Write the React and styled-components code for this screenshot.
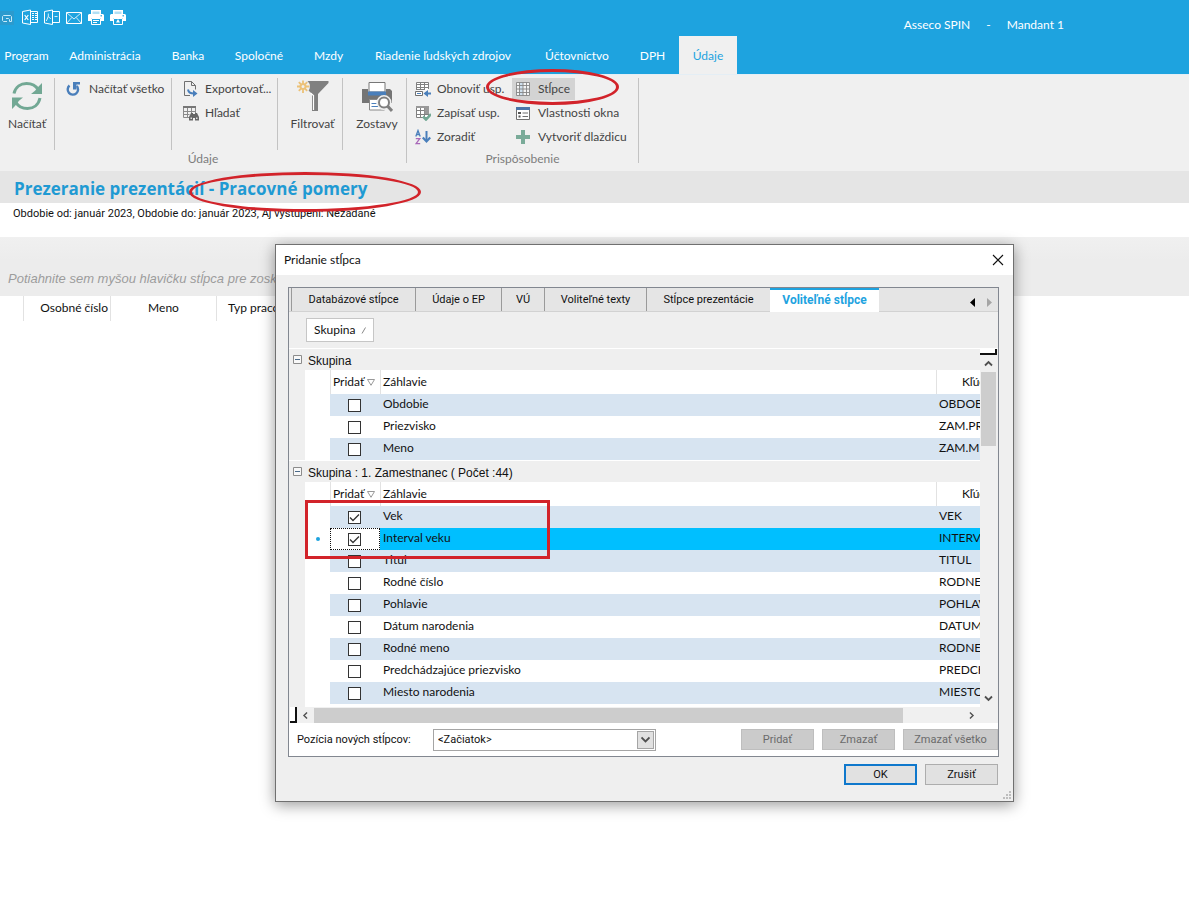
import React, { useState } from 'react';
import styled, { createGlobalStyle, css } from 'styled-components';

const ui = 'Lato, "Open Sans", sans-serif';
const narrow = 'Roboto, "Liberation Sans", sans-serif';
const blue = '#1ea3df';
const red = '#d2232a';

const GlobalStyle = createGlobalStyle`
  * { box-sizing: border-box; }
  body { margin: 0; background: #fff; color: #111; font: 12px/16px ${ui}; }
  button, select { font: inherit; color: inherit; margin: 0; padding: 0; border: 0; background: none; }
  table { border-collapse: separate; border-spacing: 0; table-layout: fixed; }
  th, td { padding: 0; font-weight: 400; text-align: left; white-space: nowrap; overflow: hidden; }
`;

const Page = styled.div`
  position: relative;
  min-height: 100vh;
  overflow: hidden;
`;

/* ---------- top bar ---------- */
const TopBar = styled.header`
  display: flex;
  justify-content: space-between;
  height: 36px;
  padding-right: 125px;
  background: ${blue};
  color: #fff;
`;
const QuickBar = styled.div`
  display: flex;
  gap: 6px;
  padding-top: 9px;
`;
const QuickButton = styled.button`
  width: 16px;
  height: 17px;
  svg { display: block; }
`;
const AppTitle = styled.div`
  display: flex;
  gap: 16px;
  padding-top: 17px;
`;

const MenuBar = styled.nav`
  display: flex;
  height: 38px;
  background: ${blue};
  color: #fff;
`;
const MenuTab = styled.button`
  flex: none;
  width: ${p => p.$w}px;
  padding-top: 2px;
  white-space: nowrap;
  ${p => p.$active && css`
    background: #f0f0f0;
    color: ${blue};
  `}
`;

/* ---------- ribbon ---------- */
const Ribbon = styled.div`
  display: flex;
  height: 97px;
  background: #f0f0f0;
  border-top: 1px solid #e4eef5;
  color: #444;
`;
const RibbonGroup = styled.section`
  display: flex;
  flex-direction: column;
  width: ${p => p.$w}px;
  border-right: 1px solid #c3c3c3;
  margin: 3px 0 8px;
`;
const RibbonBody = styled.div`
  display: flex;
  flex: none;
  height: 72px;
`;
const RibbonCaption = styled.div`
  padding-top: 2px;
  line-height: 14px;
  text-align: center;
  color: #7d7d7d;
`;
const BigButton = styled.button`
  width: ${p => p.$w}px;
  height: 72px;
  padding: 2px 0 0 ${p => p.$pad || 0}px;
  display: flex;
  flex-direction: column;
  align-items: center;
  gap: 4px;
  border-right: ${p => (p.$last ? '0' : '1px solid #c3c3c3')};
  svg { display: block; flex: none; }
`;
const CommandColumn = styled.div`
  width: ${p => p.$w}px;
  padding-left: ${p => p.$pad}px;
  border-right: ${p => (p.$line ? '1px solid #c3c3c3' : '0')};
  display: flex;
  flex-direction: column;
  gap: 2px;
  align-items: flex-start;
`;
const Command = styled.button`
  display: flex;
  align-items: center;
  gap: ${p => p.$gap || 6}px;
  height: 22px;
  padding: 0 5px 0 4px;
  white-space: nowrap;
  background: ${p => (p.$pressed ? '#d3d3d3' : 'none')};
  svg { display: block; flex: none; }
`;

/* ---------- work area ---------- */
const HeadingBand = styled.div`
  height: 32px;
  padding-left: 14px;
  background: #e5e5e5;
`;
const Heading = styled.h1`
  margin: 0;
  font: 700 17px/35px "Open Sans", sans-serif;
  color: #1f9ad3;
`;
const Filter = styled.p`
  margin: 0;
  height: 34px;
  padding: 2px 0 0 13px;
  font: 11px/18px ${narrow};
`;
const DropHint = styled.div`
  height: 59px;
  padding: 33px 0 0 8px;
  background: linear-gradient(#f0f0f0, #ececec 24px);
  font: italic 13px/17px "Liberation Sans", sans-serif;
  color: #9c9c9c;
`;
const DataTable = styled.table`
  width: 100%;
  th {
    height: 25px;
    padding-bottom: 2px;
    border-right: 1px solid #e2e2e2;
    text-align: center;
  }
  th:last-child { border: 0; text-align: left; padding-left: 11px; }
  th:nth-child(2) { text-align: right; padding-right: 2px; }
`;
const Col = styled.col`
  width: ${p => (p.$w ? p.$w + 'px' : 'auto')};
`;

/* ---------- dialog ---------- */
const Dialog = styled.section`
  position: absolute;
  left: 275px;
  top: 244px;
  width: 739px;
  display: flex;
  flex-direction: column;
  background: #efefef;
  border: 1px solid #707070;
  box-shadow: 0 3px 14px rgba(0, 0, 0, 0.4);
`;
const DialogBar = styled.header`
  display: flex;
  justify-content: space-between;
  align-items: center;
  height: 30px;
  padding: 0 9px 0 8px;
  background: #fff;
`;
const DialogTitle = styled.h2`
  margin: 0;
  font: 12px/16px ${ui};
`;
const CloseButton = styled.button`
  width: 12px;
  height: 12px;
  svg { display: block; }
`;
const Panel = styled.div`
  margin: 12px 14px 0 12px;
  border: 1px solid #828790;
`;
const TabStrip = styled.div`
  display: flex;
  height: 24px;
  background: #e5e5e5;
  border-bottom: 1px solid #d2d2d2;
  padding-left: 2px;
  font-family: ${narrow};
  font-size: 11px;
`;
const Tab = styled.button`
  flex: none;
  width: ${p => p.$w}px;
  height: 23px;
  border-left: 1px solid #9a9a9a;
  ${p => p.$active && css`
    height: 24px;
    border-left: 0;
    border-top: 2px solid ${blue};
    padding-bottom: 2px;
    background: #fff;
    color: ${blue};
    font-weight: 700;
    font-size: 12px;
  `}
`;
const TabArrows = styled.div`
  display: flex;
  gap: 12px;
  margin-left: auto;
  padding: 10px 6px 0 0;
`;
const Arrow = styled.button`
  width: 5px;
  height: 9px;
  svg { display: block; }
`;
const GroupBar = styled.div`
  height: 37px;
  padding: 6px 0 0 17px;
  border-bottom: 1px solid #fff;
`;
const GroupChip = styled.button`
  display: flex;
  align-items: center;
  gap: 6px;
  height: 24px;
  padding: 0 7px;
  border: 1px solid #c6c6c6;
  background: #fff;
`;
const GridArea = styled.div`
  display: flex;
  height: 358px;
`;
const GridView = styled.div`
  flex: 1;
  min-width: 0;
  overflow: hidden;
  background: linear-gradient(90deg, #efefef 16px, #fff 16px);
`;
const GroupRow = styled.button`
  display: flex;
  align-items: center;
  gap: 6px;
  width: 100%;
  height: ${p => (p.$first ? 21 : 22)}px;
  padding: 2px 0 0 4px;
  border-top: ${p => (p.$first ? '0' : '1px solid #fff')};
  background: #efefef;
  font: 12px/16px "Liberation Sans", sans-serif;
  svg { margin-bottom: 2px; }
`;
const ColumnTable = styled.table`
  width: calc(100% + 30px);
  thead th { height: 24px; }
  thead th:nth-child(n + 3) { border-left: 1px solid #e2e2e2; }
  thead th:nth-child(3), thead th:nth-child(4) { padding-left: 2px; }
  thead th:nth-child(5) { text-align: center; }
  td:nth-child(4), td:nth-child(5) { padding-left: 3px; }
  th:first-child, td:first-child { background: #efefef; }
`;
const Sortable = styled.div`
  display: flex;
  align-items: center;
  gap: 3px;
`;
const Row = styled.tr`
  td { height: 22px; }
  td:nth-child(n + 3) {
    padding-bottom: 2px;
    background: ${p => (p.$current ? '#00bfff' : p.$odd ? '#d7e4f1' : '#fff')};
  }
  td:nth-child(2) svg { display: block; margin: 0 auto; }
  td:nth-child(3) { padding: 0 2px 0 0; }
  ${p => p.$current && css`
    td:nth-child(3) {
      background: #fff;
      outline: 1px dotted #111;
      outline-offset: -1px;
    }
  `}
`;
const Check = styled.input`
  appearance: none;
  display: block;
  width: 13px;
  height: 13px;
  margin: 0 auto;
  border: 1px solid #333;
  background: #fff;
  &:checked {
    background: #fff url("data:image/svg+xml,%3Csvg xmlns='http://www.w3.org/2000/svg' viewBox='0 0 11 11'%3E%3Cpath d='M1 5.5l3 3 6-6' fill='none' stroke='%23333' stroke-width='1.3'/%3E%3C/svg%3E") center / 11px 11px no-repeat;
  }
`;
const VScroll = styled.div`
  display: flex;
  flex-direction: column;
  width: 17px;
  margin-right: 1px;
  padding-bottom: 3px;
  background: #f0f0f0;
  align-items: center;
`;
const TopNotch = styled.div`
  width: 17px;
  height: 6px;
  flex: none;
  margin-bottom: 4px;
  background: #fff;
  border-right: 2px solid #111;
  border-bottom: 2px solid #111;
`;
const VThumb = styled.div`
  width: 15px;
  height: 74px;
  margin: 4px 0 auto;
  background: #cdcdcd;
`;
const HScroll = styled.div`
  display: flex;
  align-items: center;
  height: 16px;
  padding-right: 23px;
  gap: 5px;
  background: #f0f0f0;
`;
const LeftNotch = styled.div`
  width: 7px;
  height: 16px;
  margin-left: 1px;
  background: #fff;
  border-right: 2px solid #111;
  border-bottom: 2px solid #111;
`;
const HTrack = styled.div`
  flex: 1;
  padding-right: 60px;
`;
const HThumb = styled.div`
  height: 15px;
  background: #cdcdcd;
`;
const ScrollButton = styled.button`
  flex: none;
  display: flex;
  align-items: center;
  justify-content: center;
  svg { display: block; }
`;
const PositionBar = styled.div`
  display: flex;
  align-items: center;
  height: 33px;
  padding-left: 8px;
  background: #fff;
  font: 11px/16px ${narrow};
`;
const PositionLabel = styled.label`
  width: 136px;
`;
const SelectBox = styled.div`
  position: relative;
  width: 223px;
  height: 22px;
  margin-right: auto;
`;
const Select = styled.select`
  appearance: none;
  width: 100%;
  height: 22px;
  padding: 0 24px 0 4px;
  border: 1px solid #a5a5a5;
  background: #fff;
`;
const SelectArrow = styled.span`
  position: absolute;
  right: 2px;
  top: 2px;
  width: 17px;
  height: 18px;
  display: grid;
  place-items: center;
  border: 1px solid #a5a5a5;
  background: #e1e1e1;
  pointer-events: none;
`;
const FlatButton = styled.button`
  width: ${p => p.$w || 73}px;
  height: 21px;
  margin-left: 8px;
  border: 1px solid #bebebe;
  background: #cbcbcb;
  color: #6a6a6a;
`;
const DialogFooter = styled.footer`
  display: flex;
  justify-content: flex-end;
  gap: 8px;
  height: 44px;
  padding: 7px 15px 0 0;
  font: 11px/16px ${narrow};
`;
const DialogButton = styled.button`
  width: 73px;
  height: 21px;
  border: ${p => (p.$primary ? '2px solid #0f78cc' : '1px solid #adadad')};
  background: #e1e1e1;
`;
const Grip = styled.svg`
  position: absolute;
  right: 2px;
  bottom: 2px;
`;

/* ---------- red pen marks ---------- */
const Mark = styled.div`
  position: absolute;
  left: ${p => p.$x}px;
  top: ${p => p.$y}px;
  width: ${p => p.$w}px;
  height: ${p => p.$h}px;
  border: 3px solid ${red};
  border-radius: ${p => (p.$round ? '50%' : '0')};
  pointer-events: none;
`;

/* ---------- icons ---------- */
const IconMenu = () => (
  <svg width="16" height="17" viewBox="0 0 16 17" fill="none">
    <rect x="0" y="2" width="14" height="14" fill="#2b9ace" />
    <path d="M7 12.500H3.500L2.500 11.500V7.500L3.500 6.500H10.500L11.500 7.500V12.500H9.500V10.500L8.500 9.500H6" stroke="#c9ebfa" />
  </svg>
);
const IconExcel = () => (
  <svg width="16" height="17" viewBox="0 0 16 17" fill="none" stroke="#fff">
    <path d="M.5 2.500L8.500 1V15.500L.5 14zM8.500 2.500H15.500V13.500H8.500" />
    <path d="M2.700 6l3.600 5M6.300 6l-3.600 5" strokeWidth="1.200" />
    <path d="M10 4.500h2M13 4.500h2M10 6.500h2M13 6.500h2M10 8.500h2M13 8.500h2M10 10.500h2M13 10.500h2" />
  </svg>
);
const IconPdf = () => (
  <svg width="16" height="17" viewBox="0 0 16 17" fill="none" stroke="#fff">
    <path d="M.5 2.500L8.500 1V15.500L.5 14zM8.500 2.500H15.500V13.500H8.500" />
    <path d="M4.300 4.500v3L2.300 12M4.300 7.500l2.500 2.500" opacity=".85" />
    <path d="M10.500 7.500h3" opacity=".8" />
  </svg>
);
const IconMail = () => (
  <svg width="16" height="17" viewBox="0 0 16 17" fill="none" stroke="#fff">
    <path d="M.5 3.500H15.500V14.500H.5z" />
    <path d="M.5 3.500L8 10 15.500 3.500M.5 14.500L5.800 8.500M15.500 14.500L10.200 8.500" strokeWidth=".8" />
  </svg>
);
const IconPrint = ({ star }) => (
  <svg width="16" height="17" viewBox="0 0 16 17">
    <path d="M3 1h10v4H3z" fill="#fff" />
    <path d="M4.500 2.500h7V5h-7z" fill={blue} opacity=".35" />
    <path d="M1 5h14l1 1v6h-3V9H3v3H0V6z" fill="#fff" />
    <rect x="12.500" y="6.200" width="1.500" height="1.200" fill={blue} />
    <path d="M3.500 9.500h9v6h-9z" fill={blue} stroke="#fff" />
    {star ? <path d="M8 10l2 3.500H6z" fill="#fff" /> : <path d="M5 11.500h6M5 13.500h4" stroke="#fff" />}
  </svg>
);
const IconRefresh = () => (
  <svg width="30" height="32" viewBox="0 -1 30 32" fill="none" stroke="#72a894" strokeWidth="3">
    <path d="M2 12.500C3.500 5.500 9 2.500 14.500 2.500 19.500 2.500 23.500 4 26 8.500" />
    <path d="M28 17c-1.500 7-6.500 10.500-12.500 10.500C10.500 27.500 6.500 26 4 21.500" />
    <path d="M30 2v11H19l4-3.200 4-4.800z M0 28V16.500h11l-4 3.200L3 25z" fill="#72a894" stroke="none" />
  </svg>
);
const IconReload = () => (
  <svg width="14" height="15" viewBox="0 0 14 15" fill="none" stroke="#4a7fbb" strokeWidth="2.400">
    <path d="M3.500 3.500A5.200 5.200 0 1 0 10.800 4" />
    <path d="M7 0H14V2.600H10.500V7.500H7z" fill="#4a7fbb" stroke="none" />
  </svg>
);
const IconExport = () => (
  <svg width="16" height="16" viewBox="0 0 16 16" fill="none">
    <path d="M7 14.500H1.500V.5H8.500L12.500 4.500V8.500M8.500 .5V4.500H12.500" stroke="#707070" />
    <path d="M5 8.500c.5 3 2.500 4 6 4" stroke="#4a7fbb" strokeWidth="2" />
    <path d="M10 9l4.500 3.500L10 16z" fill="#4a7fbb" />
  </svg>
);
const IconFind = () => (
  <svg width="16" height="16" viewBox="0 0 16 16">
    <path d="M.5 1.500h12V8M.5 1.500v11H6M4.500 3v9.500M8.500 3v5M.5 6.500h12M.5 9.500h6" fill="none" stroke="#8a8a8a" />
    <path d="M0 1h13v2H0z" fill="#777" />
    <path d="M8 8h2v1h2V8h2l2 4v3.500h-4V13h-2v2.500H6V12z" fill="#666" />
    <path d="M7.500 12.500h1.500v1.500H7.500zM13 12.500h1.500v1.500H13z" fill="#ddd" />
  </svg>
);
const IconFilter = () => (
  <svg width="32" height="32" viewBox="0 0 32 32">
    <path d="M8 1H31.500V3L21 14V31H15V14L11 10z" fill="#808080" />
    <path d="M13.500 13l3 2.500V30" fill="none" stroke="#fff" strokeWidth="1.200" />
    <circle cx="6" cy="6.500" r="7" fill="#f0f0f0" />
    <circle cx="6" cy="6.500" r="2.500" fill="none" stroke="#ecc177" strokeWidth="2" />
    <path d="M6 .5v3M6 9.500v3.500M0 6.500h3M9 6.500h3.500M1.800 2.200l2 2M8.200 8.800l2 2M10.200 2.200l-2 2M3.800 8.800l-2 2" stroke="#ecc177" strokeWidth="1.800" />
  </svg>
);
const IconReports = () => (
  <svg width="32" height="32" viewBox="0 0 32 32">
    <path d="M8.500 2.500h15v10h-15z" fill="#fff" stroke="#777" />
    <path d="M1 9h6v3h18V9h4l2 2v12H1z" fill="#757575" />
    <path d="M8 2.500h16V12H8z" fill="#fff" stroke="#777" />
    <path d="M7 11.500h18v4H7z" fill="#4a7fbb" />
    <path d="M8.500 19.500h15V30h-15z" fill="#fff" stroke="#888" />
    <path d="M10.500 23.500h5M10.500 26.500h7" stroke="#4a7fbb" strokeWidth="1.200" />
    <circle cx="23" cy="22.500" r="5.500" fill="#fff" stroke="#f0f0f0" strokeWidth="4" />
    <circle cx="23" cy="22.500" r="5" fill="#fff" stroke="#808080" strokeWidth="2" />
    <path d="M26.500 26l4.500 5" stroke="#808080" strokeWidth="3" />
  </svg>
);
const IconGridLeft = () => (
  <svg width="16" height="16" viewBox="0 0 16 16" fill="none">
    <path d="M1.500 1.500h12v8h-12z" fill="#fff" />
    <path d="M1.500 1.500h12V8M1.500 1.500V9M5.500 1.500V9M9.500 1.500V9M1.500 3.500h12M1.500 6.500h12M1.500 8.500h8" stroke="#808080" />
    <path d="M.5 10.500h7v4h-7z" fill="#fff" stroke="#707070" />
    <path d="M2 12.500h4" stroke="#4a7fbb" />
    <path d="M10 12.500h6" stroke="#4a7fbb" strokeWidth="2" />
    <path d="M13 9v7l-4.500-3.500z" fill="#4a7fbb" />
  </svg>
);
const IconGridCheck = () => (
  <svg width="16" height="16" viewBox="0 0 16 16" fill="none">
    <path d="M1.500 1.500h12v11h-12zM5.500 3v9.500M9.500 3v9.500M1.500 5.500h12M1.500 9.500h12" stroke="#808080" fill="#fff" />
    <path d="M1 1h13v2H1zM9.500 3H14v6H9.500z" fill="#999" />
    <path d="M8 11.500l3 3L16 9" stroke="#72a894" strokeWidth="2.600" />
  </svg>
);
const IconSort = () => (
  <svg width="16" height="16" viewBox="0 0 16 16" fill="none">
    <path d="M.8 7.500L3 1.500 5.200 7.500M1.500 5.500h3" stroke="#4a7fbb" strokeWidth="1.300" />
    <path d="M.8 9.700h4L1 14.700h4.200" stroke="#a868b8" strokeWidth="1.300" />
    <path d="M11.500 2v10" stroke="#4a7fbb" strokeWidth="2" />
    <path d="M7.800 8.500l3.700 4 3.700-4" stroke="#4a7fbb" strokeWidth="2.200" />
  </svg>
);
const IconColumns = () => (
  <svg width="14" height="14" viewBox="0 0 14 14" fill="none">
    <path d="M.5 .5h13v13H.5z" fill="#f4f4f4" />
    <path d="M4 1h3v12H4z" fill="#cfe0ee" />
    <path d="M.5 .5h13v13H.5zM3.500 .5v13M7 .5v13M10.500 .5v13M.5 3.500h13M.5 7h13M.5 10.500h13" stroke="#858585" strokeWidth=".9" />
  </svg>
);
const IconWindow = () => (
  <svg width="14" height="14" viewBox="0 0 14 14" fill="none">
    <path d="M.5 1.500h13v12H.5z" fill="#fff" stroke="#707070" />
    <path d="M0 1h14v3H0z" fill="#4a74a8" />
    <path d="M2 6h3v2H2zM2.500 9.500h2v2h-2z" fill="#555" />
    <path d="M6.500 7h5.500M6.500 10.500h5.500" stroke="#707070" />
  </svg>
);
const IconPlus = () => (
  <svg width="14" height="14" viewBox="0 0 14 14">
    <path d="M5 0h4v5h5v4H9v5H5V9H0V5h5z" fill="#7aab99" />
  </svg>
);
const Chevron = ({ d, w = 9, h = 9 }) => (
  <svg width={w} height={h} viewBox="0 0 9 9" fill="none" stroke="#505050" strokeWidth="1.800">
    <path d={d} />
  </svg>
);
const IconMinusBox = () => (
  <svg width="9" height="9" viewBox="0 0 9 9" fill="none">
    <path d="M.5 .5h8v8h-8z" fill="#f8f8f8" stroke="#8c8c8c" />
    <path d="M2 4.500h5" stroke="#4a6a8a" />
  </svg>
);
const IconSortMark = () => (
  <svg width="8" height="7" viewBox="0 0 8 7" fill="none" stroke="#999">
    <path d="M.5 .5h7L4 6.300z" />
  </svg>
);

/* ---------- data ---------- */
const quickIcons = [
  ['Ponuka', <IconMenu />], ['Excel', <IconExcel />], ['PDF', <IconPdf />],
  ['E-mail', <IconMail />], ['Tlač', <IconPrint />], ['Náhľad tlače', <IconPrint star />],
];
const menu = [
  ['Program', 53], ['Administrácia', 104], ['Banka', 62], ['Spoločné', 80], ['Mzdy', 59],
  ['Riadenie ľudských zdrojov', 170], ['Účtovníctvo', 98], ['DPH', 53], ['Údaje', 58, true],
];
const tabs = [
  ['Databázové stĺpce', 124], ['Údaje o EP', 86], ['VÚ', 43], ['Voliteľné texty', 102],
  ['Stĺpce prezentácie', 124], ['Voliteľné stĺpce', 109, true],
];
const groups = [
  { title: 'Skupina', rows: [['Obdobie', 'OBDOBIE'], ['Priezvisko', 'ZAM.PRIEZ'], ['Meno', 'ZAM.MENO']] },
  {
    title: 'Skupina : 1. Zamestnanec ( Počet :44)',
    rows: [
      ['Vek', 'VEK', true], ['Interval veku', 'INTERVAL', true, true], ['Titul', 'TITUL'],
      ['Rodné číslo', 'RODNE_CIS'], ['Pohlavie', 'POHLAVIE'], ['Dátum narodenia', 'DATUM_NAR'],
      ['Rodné meno', 'RODNE_ME'], ['Predchádzajúce priezvisko', 'PREDCHAD'], ['Miesto narodenia', 'MIESTO_N'],
    ],
  },
];

function ColumnGroup({ group, first }) {
  const [checked, setChecked] = useState(group.rows.map(r => !!r[2]));
  const toggle = i => setChecked(checked.map((c, k) => (k === i ? !c : c)));
  return (
    <>
      <GroupRow $first={first}><IconMinusBox />{group.title}</GroupRow>
      <ColumnTable>
        <colgroup><Col $w={16} /><Col $w={25} /><Col $w={50} /><Col /><Col $w={74} /></colgroup>
        <thead>
          <tr>
            <th /><th />
            <th><Sortable>Pridať<IconSortMark /></Sortable></th>
            <th>Záhlavie</th>
            <th>Kľúč</th>
          </tr>
        </thead>
        <tbody>
          {group.rows.map(([name, key, , current], i) => (
            <Row key={name} $current={current} $odd={i % 2 === 0}>
              <td />
              <td>{current && <svg width="4" height="4"><circle cx="2" cy="2" r="2" fill={blue} /></svg>}</td>
              <td><Check type="checkbox" aria-label={name} checked={checked[i]} onChange={() => toggle(i)} /></td>
              <td>{name}</td>
              <td>{key}</td>
            </Row>
          ))}
        </tbody>
      </ColumnTable>
    </>
  );
}

function AddColumnDialog() {
  return (
    <Dialog role="dialog" aria-labelledby="dialog-title">
      <DialogBar>
        <DialogTitle id="dialog-title">Pridanie stĺpca</DialogTitle>
        <CloseButton aria-label="Zavrieť">
          <svg width="12" height="12" viewBox="0 0 12 12" stroke="#111" strokeWidth="1.100"><path d="M1 1l10 10M11 1L1 11" /></svg>
        </CloseButton>
      </DialogBar>
      <Panel>
        <TabStrip>
          {tabs.map(([label, w, active]) => <Tab key={label} $w={w} $active={active}>{label}</Tab>)}
          <TabArrows>
            <Arrow aria-label="Predošlá karta"><svg width="5" height="9"><path d="M5 0v9L0 4.500z" fill="#000" /></svg></Arrow>
            <Arrow aria-label="Ďalšia karta"><svg width="5" height="9"><path d="M0 0v9l5-4.500z" fill="#a5a5a5" /></svg></Arrow>
          </TabArrows>
        </TabStrip>
        <GroupBar>
          <GroupChip>
            Skupina
            <svg width="5" height="7" viewBox="0 0 5 7" stroke="#888"><path d="M4.500 .5L1 6.500" /></svg>
          </GroupChip>
        </GroupBar>
        <GridArea>
          <GridView>
            {groups.map((g, i) => <ColumnGroup key={g.title} group={g} first={i === 0} />)}
          </GridView>
          <VScroll>
            <TopNotch />
            <ScrollButton aria-label="Nahor"><Chevron d="M1 6.500L4.500 3 8 6.500" /></ScrollButton>
            <VThumb />
            <ScrollButton aria-label="Nadol"><Chevron d="M1 1.500L4.500 5 8 1.500" /></ScrollButton>
          </VScroll>
        </GridArea>
        <HScroll>
          <LeftNotch />
          <ScrollButton aria-label="Doľava"><Chevron d="M6.500 .5l-4 4 4 4" w={7} /></ScrollButton>
          <HTrack><HThumb /></HTrack>
          <ScrollButton aria-label="Doprava"><Chevron d="M2.500 .5l4 4-4 4" w={7} /></ScrollButton>
        </HScroll>
        <PositionBar>
          <PositionLabel htmlFor="position">Pozícia nových stĺpcov:</PositionLabel>
          <SelectBox>
            <Select id="position"><option>&lt;Začiatok&gt;</option></Select>
            <SelectArrow><Chevron d="M.5 2.500l4 4 4-4" /></SelectArrow>
          </SelectBox>
          <FlatButton>Pridať</FlatButton>
          <FlatButton>Zmazať</FlatButton>
          <FlatButton $w={95}>Zmazať všetko</FlatButton>
        </PositionBar>
      </Panel>
      <DialogFooter>
        <DialogButton $primary>OK</DialogButton>
        <DialogButton>Zrušiť</DialogButton>
      </DialogFooter>
      <Grip width="8" height="8" fill="#bdbdbd">
        <path d="M6 0h2v2H6zM6 3h2v2H6zM6 6h2v2H6zM3 3h2v2H3zM3 6h2v2H3zM0 6h2v2H0z" />
      </Grip>
      <Mark $x={29} $y={255} $w={245} $h={59} />
    </Dialog>
  );
}

export default function App() {
  return (
    <Page>
      <GlobalStyle />
      <TopBar>
        <QuickBar>
          {quickIcons.map(([label, icon]) => <QuickButton key={label} aria-label={label}>{icon}</QuickButton>)}
        </QuickBar>
        <AppTitle><span>Asseco SPIN</span><span>-</span><span>Mandant 1</span></AppTitle>
      </TopBar>
      <MenuBar>
        {menu.map(([label, w, active]) => <MenuTab key={label} $w={w} $active={active}>{label}</MenuTab>)}
      </MenuBar>
      <Ribbon>
        <RibbonGroup $w={407}>
          <RibbonBody>
            <BigButton $w={55}><IconRefresh />Načítať</BigButton>
            <CommandColumn $w={117} $pad={7} $line>
              <Command $gap={9}><IconReload />Načítať všetko</Command>
            </CommandColumn>
            <CommandColumn $w={106} $pad={7} $line>
              <Command><IconExport />Exportovať...</Command>
              <Command><IconFind />Hľadať</Command>
            </CommandColumn>
            <BigButton $w={65} $pad={5}><IconFilter />Filtrovať</BigButton>
            <BigButton $w={63} $pad={5} $last><IconReports />Zostavy</BigButton>
          </RibbonBody>
          <RibbonCaption>Údaje</RibbonCaption>
        </RibbonGroup>
        <RibbonGroup $w={232}>
          <RibbonBody>
            <CommandColumn $w={105} $pad={4}>
              <Command><IconGridLeft />Obnoviť usp.</Command>
              <Command><IconGridCheck />Zapísať usp.</Command>
              <Command><IconSort />Zoradiť</Command>
            </CommandColumn>
            <CommandColumn $w={126} $pad={0}>
              <Command $gap={8} $pressed><IconColumns />Stĺpce</Command>
              <Command $gap={8}><IconWindow />Vlastnosti okna</Command>
              <Command $gap={8}><IconPlus />Vytvoriť dlaždicu</Command>
            </CommandColumn>
          </RibbonBody>
          <RibbonCaption>Prispôsobenie</RibbonCaption>
        </RibbonGroup>
      </Ribbon>
      <main>
        <HeadingBand><Heading>Prezeranie prezentácií - Pracovné pomery</Heading></HeadingBand>
        <Filter>Obdobie od: január 2023, Obdobie do: január 2023, Aj vystúpení: Nezadané</Filter>
        <DropHint>Potiahnite sem myšou hlavičku stĺpca pre zosk</DropHint>
        <DataTable>
          <colgroup><Col $w={24} /><Col $w={87} /><Col $w={106} /><Col /></colgroup>
          <thead>
            <tr><th /><th>Osobné číslo</th><th>Meno</th><th>Typ pracov</th></tr>
          </thead>
        </DataTable>
      </main>
      <AddColumnDialog />
      <Mark $x={486} $y={69} $w={133} $h={36} $round />
      <Mark $x={189} $y={172} $w={232} $h={40} $round />
    </Page>
  );
}
